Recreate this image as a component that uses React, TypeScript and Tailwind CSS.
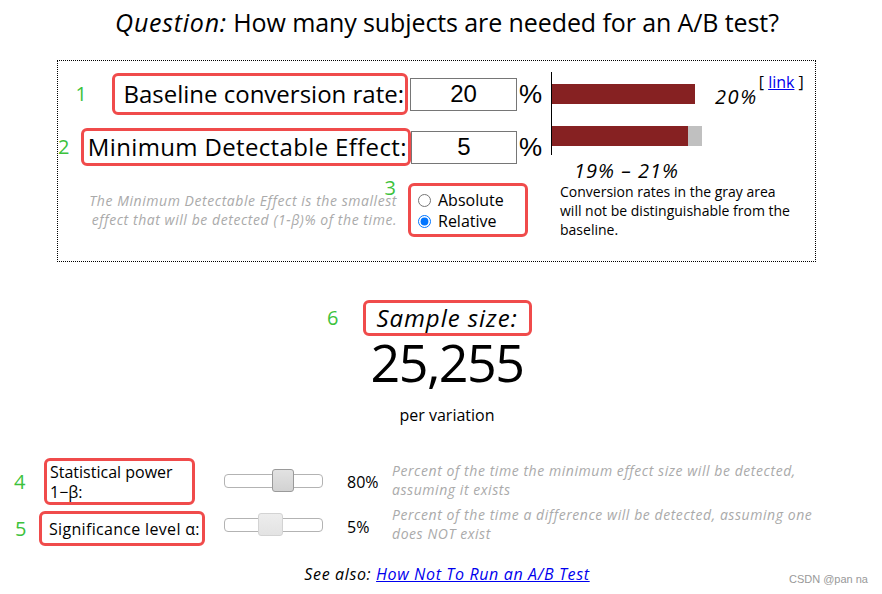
import React from "react";

const RED = "border-[3px] border-[#f04b4b] rounded-[6px]";
const GREEN = "text-[#3cc23c]";

function Slider({ left, w, dark }: { left: number; w: number; dark: boolean }) {
  return (
    <div className="relative w-[99px] h-[14px] border border-[#b3b3b3] rounded-[4px] bg-white">
      <div
        className={
          dark
            ? "absolute top-[-6px] h-[23px] rounded-[3px] border border-[#9a9a9a] bg-gradient-to-b from-[#e2e2e2] to-[#d2d2d2]"
            : "absolute top-[-6px] h-[23px] rounded-[3px] border border-[#d3d3d3] bg-gradient-to-b from-[#ededed] to-[#e3e3e3]"
        }
        style={{ left, width: w }}
      />
    </div>
  );
}

export default function App() {
  return (
    <div className="relative w-[882px] h-[594px] overflow-hidden bg-white text-black font-['Open_Sans','Noto_Sans',sans-serif]">
      {/* Title */}
      <div className="h-[60px] pt-[6px] text-center text-[25px] leading-[32px] pl-[12px] tracking-[-0.1px] whitespace-nowrap">
        <i className="tracking-[0.03em]">Question:</i> How many subjects are needed for an A/B test?
      </div>

      {/* Dotted box */}
      <div className="ml-[57px] w-[759px] h-[202px] border border-dotted border-black flex">
        {/* Left column */}
        <div className="w-[488px] flex flex-col">
          <div className="mt-[12px] h-[42px] flex items-center justify-end pr-[5px]">
            <span className={`text-[20px] mr-[25px] ${GREEN}`}>1</span>
            <div className={`${RED} w-[296px] h-[42px] flex items-center justify-end pr-[1px] text-[24px] leading-[30px] whitespace-nowrap`}>
              Baseline conversion rate:
            </div>
            <div className="ml-[2px] w-[107px] h-[33px] border border-[#767676] flex items-center justify-center text-[24px] font-['Liberation_Sans',sans-serif]">
              20
            </div>
            <span className="ml-[2px] w-[22px] text-[26px] font-['Liberation_Sans',sans-serif]">%</span>
          </div>
          <div className="mt-[13px] h-[38px] flex items-center justify-end pr-[5px]">
            <span className={`text-[20px] mr-[12px] ${GREEN}`}>2</span>
            <div className={`${RED} w-[332px] h-[38px] flex items-center justify-end pr-[1px] text-[24px] leading-[30px] tracking-[0.35px] whitespace-nowrap`}>
              Minimum Detectable Effect:
            </div>
            <div className="w-[107px] h-[33px] border border-[#767676] flex items-center justify-center text-[24px] font-['Liberation_Sans',sans-serif]">
              5
            </div>
            <span className="ml-[2px] w-[22px] text-[26px] font-['Liberation_Sans',sans-serif]">%</span>
          </div>
          <div className="mt-[17px] flex items-center justify-end pr-[18px]">
            <div className="mr-[11px] text-right italic text-[14px] leading-[19px] tracking-[0.04em] text-[#aaaaaa] whitespace-nowrap">
              The Minimum Detectable Effect is the smallest
              <br />
              effect that will be detected (1-β)% of the time.
            </div>
            <div className={`${RED} relative w-[120px] h-[54px] flex flex-col justify-center pl-[7px] pt-[2px] text-[16px] leading-[21px]`}>
              <span className={`absolute right-full mr-[15px] top-[-10px] text-[20px] leading-[24px] ${GREEN}`}>3</span>
              <label className="flex items-center gap-[7px]">
                <input type="radio" name="mode" className="w-[13px] h-[13px]" />
                Absolute
              </label>
              <label className="flex items-center gap-[7px]">
                <input type="radio" name="mode" defaultChecked className="w-[13px] h-[13px]" />
                Relative
              </label>
            </div>
          </div>
        </div>

        {/* Right column */}
        <div className="flex-1 pl-[5px] pt-[11px] flex flex-col">
          <div className="flex items-start">
            <div className="w-[151px] h-[83px] border-l border-black pt-[12px] flex flex-col">
              <div className="h-[20px] w-[143px] bg-[#862122]" />
              <div className="mt-[22px] h-[20px] flex">
                <div className="w-[136px] bg-[#862122]" />
                <div className="w-[14px] bg-[#c0c0c0]" />
              </div>
            </div>
            <span className="ml-[13px] mt-[13px] italic text-[20px] leading-[24px] tracking-[0.08em]">20%</span>
            <span className="ml-[1px] mt-[0px] text-[16px] leading-[20px]">
              [ <a className="text-[#0000ee] underline">link</a> ]
            </span>
          </div>
          <div className="mt-[5px] w-[151px] text-center italic text-[20px] leading-[22px] tracking-[0.05em]">
            19% – 21%
          </div>
          <div className="pl-[9px] text-[14px] leading-[19px]">
            Conversion rates in the gray area
            <br />
            will not be distinguishable from the
            <br />
            baseline.
          </div>
        </div>
      </div>

      {/* Sample size */}
      <div className="mt-[38px] flex flex-col items-center pl-[12px]">
        <div className={`${RED} relative w-[169px] h-[36px] flex items-center justify-center italic text-[24px] leading-[30px] tracking-[0.04em]`}>
          <span className={`absolute right-full mr-[27px] not-italic tracking-normal text-[20px] ${GREEN}`}>6</span>
          Sample size:
        </div>
        <div className="mt-[4px] text-[52px] leading-[44px] tracking-[-1.5px]">25,255</div>
        <div className="mt-[21px] text-[16px] leading-[20px]">per variation</div>
      </div>

      {/* Power */}
      <div className="mt-[33px] flex items-start">
        <div className="w-[224px] flex items-center">
          <span className={`w-[44px] pl-[14px] text-[20px] ${GREEN}`}>4</span>
          <div className={`${RED} w-[151px] h-[47px] flex flex-col justify-center pl-[3px] text-[16px] leading-[20px]`}>
            <span>Statistical power</span>
            <span>1−β:</span>
          </div>
        </div>
        <div className="mt-[16px]">
          <Slider left={47} w={22} dark />
        </div>
        <div className="ml-[24px] w-[45px] mt-[14px] text-[16px] leading-[20px]">80%</div>
        <div className="mt-[3px] italic text-[14px] leading-[19px] tracking-[0.04em] text-[#aaaaaa] whitespace-nowrap">
          Percent of the time the minimum effect size will be detected,
          <br />
          assuming it exists
        </div>
      </div>

      {/* Significance */}
      <div className="flex items-start">
        <div className="w-[224px] mt-[6px] flex items-center">
          <span className={`w-[39px] pl-[15px] text-[20px] ${GREEN}`}>5</span>
          <div className={`${RED} w-[166px] h-[35px] flex items-center pl-[7px] text-[16px] leading-[20px] tracking-[0.02em] whitespace-nowrap`}>
            Significance level α:
          </div>
        </div>
        <div className="mt-[13px]">
          <Slider left={33} w={25} dark={false} />
        </div>
        <div className="ml-[24px] w-[45px] mt-[12px] text-[16px] leading-[20px]">5%</div>
        <div className="italic text-[14px] leading-[19px] tracking-[0.04em] text-[#aaaaaa] whitespace-nowrap">
          Percent of the time a difference will be detected, assuming one
          <br />
          does NOT exist
        </div>
      </div>

      {/* See also */}
      <div className="mt-[18px] pl-[12px] text-center italic text-[16px] leading-[20px] tracking-[0.04em]">
        See also: <a className="text-[#0000ee] underline">How Not To Run an A/B Test</a>
      </div>

      <div className="absolute right-[14px] bottom-[8px] text-[11px] leading-[13px] text-[#999999] font-['Liberation_Sans',sans-serif]">
        CSDN @pan na
      </div>
    </div>
  );
}
